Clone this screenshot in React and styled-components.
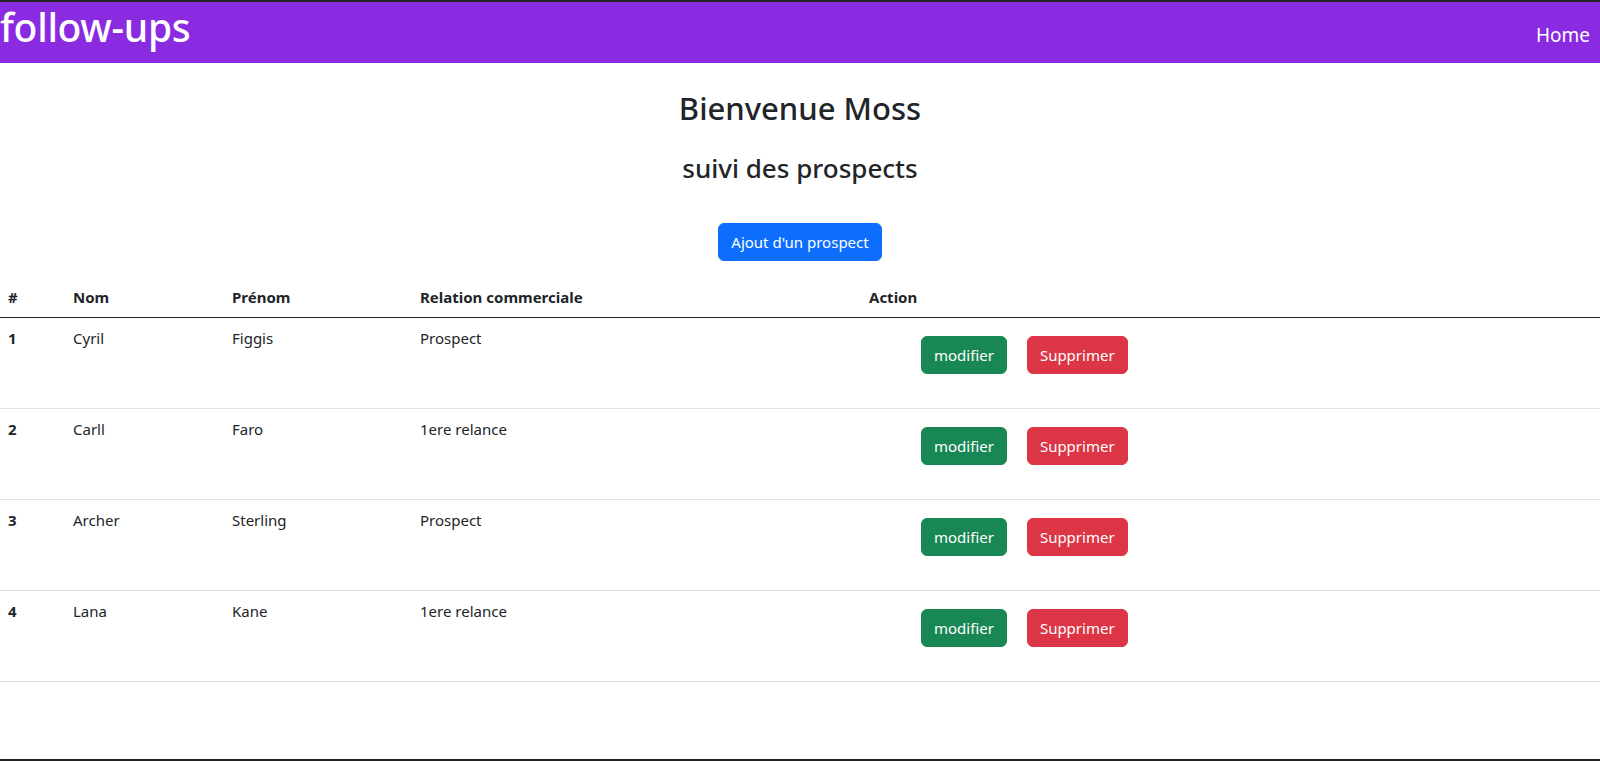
import React from 'react'
import styled, { createGlobalStyle } from 'styled-components'

const GlobalStyle = createGlobalStyle`
  * { box-sizing: border-box; }
  body {
    margin: 0;
    font-family: "Noto Sans", "Open Sans", sans-serif;
    color: #212529;
    background: #fff;
  }
`

const prospects = [
  { id: 1, nom: 'Cyril', prenom: 'Figgis', relation: 'Prospect' },
  { id: 2, nom: 'Carll', prenom: 'Faro', relation: '1ere relance' },
  { id: 3, nom: 'Archer', prenom: 'Sterling', relation: 'Prospect' },
  { id: 4, nom: 'Lana', prenom: 'Kane', relation: '1ere relance' },
]

function App() {
  return (
    <Page>
      <GlobalStyle />
      <Navbar>
        <Brand>follow-ups</Brand>
        <NavLink>Home</NavLink>
      </Navbar>
      <Main>
        <Title>Bienvenue Moss</Title>
        <SubTitle>suivi des prospects</SubTitle>
        <Button variant="primary">Ajout d'un prospect</Button>
      </Main>
      <Table>
        <colgroup>
          <col style={{ width: 65 }} />
          <col style={{ width: 159 }} />
          <col style={{ width: 188 }} />
          <col style={{ width: 449 }} />
          <col />
        </colgroup>
        <thead>
          <tr>
            <Th>#</Th>
            <Th>Nom</Th>
            <Th>Prénom</Th>
            <Th>Relation commerciale</Th>
            <Th>Action</Th>
          </tr>
        </thead>
        <tbody>
          {prospects.map((p) => (
            <Row key={p.id}>
              <Td bold>{p.id}</Td>
              <Td>{p.nom}</Td>
              <Td>{p.prenom}</Td>
              <Td>{p.relation}</Td>
              <Td>
                <Actions>
                  <Button variant="success">modifier</Button>
                  <Button variant="danger">Supprimer</Button>
                </Actions>
              </Td>
            </Row>
          ))}
        </tbody>
      </Table>
    </Page>
  )
}

export default App

const Page = styled.div`
  min-height: 100vh;
  border-top: 2px solid #222;
  border-bottom: 2px solid #222;
`

const Navbar = styled.nav`
  background-color: #8a2be2;
  height: 61px;
  display: flex;
  align-items: center;
  justify-content: space-between;
  padding-right: 10px;
`

const Brand = styled.div`
  color: #fff;
  font-size: 39px;
  font-weight: 500;
  line-height: 1;
  margin-top: -12px;
  letter-spacing: -0.3px;
`

const NavLink = styled.a`
  color: #fff;
  font-size: 19px;
  margin-top: 4px;
  cursor: pointer;
`

const Main = styled.div`
  display: flex;
  flex-direction: column;
  align-items: center;
  padding-top: 27px;
`

const Title = styled.h2`
  margin: 0 0 11px;
  font-size: 31px;
  font-weight: 500;
  line-height: 1.2;
`

const SubTitle = styled.h3`
  margin: 15px 0 39px;
  font-size: 26px;
  font-weight: 500;
  line-height: 1.2;
`

const colors = {
  primary: '#0d6efd',
  success: '#198754',
  danger: '#dc3545',
}

const Button = styled.button`
  background-color: ${(p) => colors[p.variant]};
  border: 1px solid ${(p) => colors[p.variant]};
  color: #fff;
  font-family: inherit;
  font-size: 15px;
  line-height: 24px;
  padding: 6px 12px;
  border-radius: 6px;
  cursor: pointer;
`

const Table = styled.table`
  width: 100%;
  margin-top: 16px;
  border-collapse: collapse;
  table-layout: fixed;
`

const Th = styled.th`
  text-align: left;
  font-size: 15px;
  font-weight: 700;
  padding: 8px;
  line-height: 24px;
  border-bottom: 1px solid #212529;
`

const Row = styled.tr`
  height: 91px;
  border-bottom: 1px solid #dee2e6;
`

const Td = styled.td`
  vertical-align: top;
  padding: 8px;
  font-size: 15px;
  line-height: 24px;
  font-weight: ${(p) => (p.bold ? 700 : 400)};
`

const Actions = styled.div`
  display: flex;
  gap: 20px;
  margin: 10px 0 0 52px;
`
